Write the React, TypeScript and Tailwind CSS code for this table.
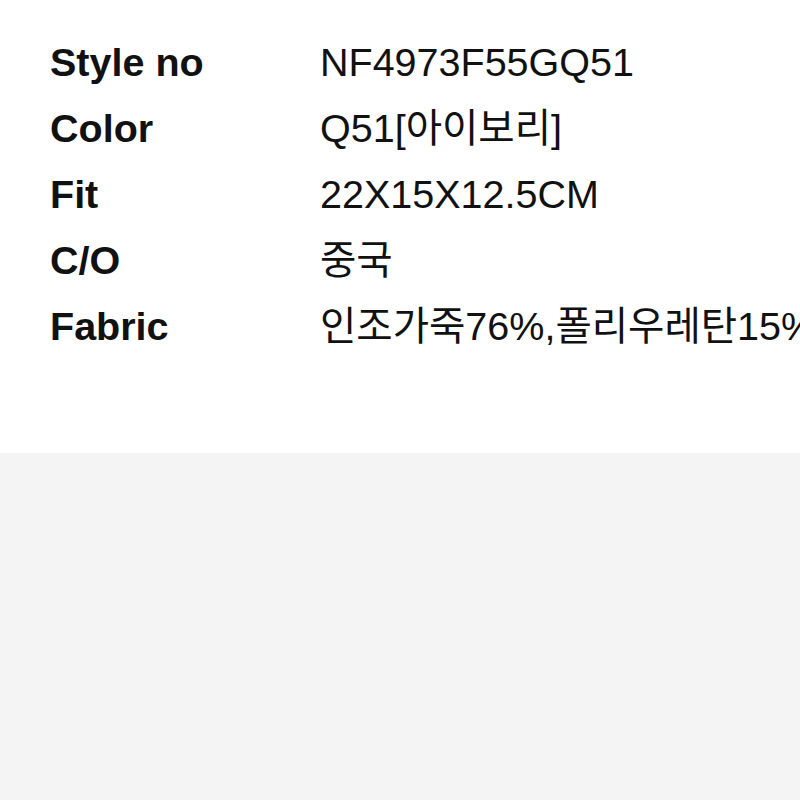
import React from 'react';

interface SpecRow {
  label: string;
  value: string;
}

const rows: SpecRow[] = [
  { label: 'Style no', value: 'NF4973F55GQ51' },
  { label: 'Color', value: 'Q51[아이보리]' },
  { label: 'Fit', value: '22X15X12.5CM' },
  { label: 'C/O', value: '중국' },
  { label: 'Fabric', value: '인조가죽76%,폴리우레탄15%,폴리에스터9%' },
];

const App: React.FC = () => {
  return (
    <div className="w-[800px] h-[800px] overflow-hidden bg-[#f4f4f4] font-['Liberation_Sans','Noto_Sans_CJK_KR',sans-serif] text-[#111]">
      <div className="h-[453px] bg-white pt-[29px] pl-[50px]">
        {rows.map((row) => (
          <div key={row.label} className="flex h-[66px] items-center whitespace-nowrap text-[39.5px] leading-[66px]">
            <div className="w-[270px] shrink-0 font-bold">{row.label}</div>
            <div className="font-normal">{row.value}</div>
          </div>
        ))}
      </div>
    </div>
  );
};

export default App;
